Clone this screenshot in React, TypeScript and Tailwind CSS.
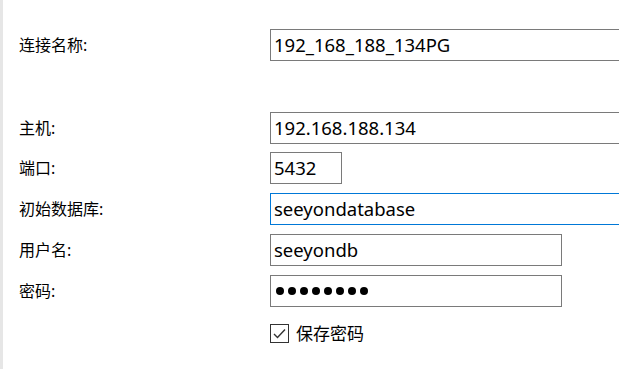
import React from 'react';

// Connection settings form (Windows-style dialog pane)
const LABEL_FONT = { fontFamily: '"Noto Sans", "Noto Sans CJK SC", sans-serif' };

type Row = {
  label: string;
  value?: string;
  width: string;
  mt: string;
  focused?: boolean;
  password?: boolean;
};

const ROWS: Row[] = [
  { label: '连接名称:', value: '192_168_188_134PG', width: 'w-[400px]', mt: 'mt-[29px]' },
  { label: '主机:', value: '192.168.188.134', width: 'w-[400px]', mt: 'mt-[51px]' },
  { label: '端口:', value: '5432', width: 'w-[72px]', mt: 'mt-[8px]' },
  { label: '初始数据库:', value: 'seeyondatabase', width: 'w-[400px]', mt: 'mt-[9px]', focused: true },
  { label: '用户名:', value: 'seeyondb', width: 'w-[292px]', mt: 'mt-[9px]' },
  { label: '密码:', width: 'w-[292px]', mt: 'mt-[9px]', password: true },
];

const App: React.FC = () => {
  return (
    <div className="w-[619px] h-[369px] bg-white flex overflow-hidden text-black" style={LABEL_FONT}>
      <div className="w-[3px] h-full bg-[#e6e6e6] shrink-0" />
      <div className="flex flex-col pl-[16px]">
        {ROWS.map((row) => (
          <div key={row.label} className={`flex items-center h-[32px] ${row.mt}`}>
            <div className="w-[251px] shrink-0 text-[16px] leading-none">{row.label}</div>
            <div
              className={`${row.width} h-[32px] shrink-0 border flex items-center pl-[3px] ${
                row.focused ? 'border-[#0078d7]' : 'border-[#7a7a7a]'
              }`}
            >
              {row.password ? (
                <div className="flex gap-[4px] pl-[2px]">
                  {Array.from({ length: 8 }).map((_, i) => (
                    <span key={i} className="w-[8px] h-[8px] rounded-full bg-black" />
                  ))}
                </div>
              ) : (
                <span className="text-[18.5px] leading-none whitespace-nowrap">{row.value}</span>
              )}
            </div>
          </div>
        ))}

        {/* Save password checkbox */}
        <div className="flex items-center mt-[17px] pl-[251px] gap-[7px]">
          <div className="w-[19px] h-[19px] border border-[#333333] flex items-center justify-center">
            <svg width="15" height="15" viewBox="0 0 15 15">
              <polyline points="2,8 5.5,11.5 13,3.5" fill="none" stroke="#333333" strokeWidth="1.4" />
            </svg>
          </div>
          <span className="text-[17px] leading-none">保存密码</span>
        </div>
      </div>
    </div>
  );
};

export default App;
